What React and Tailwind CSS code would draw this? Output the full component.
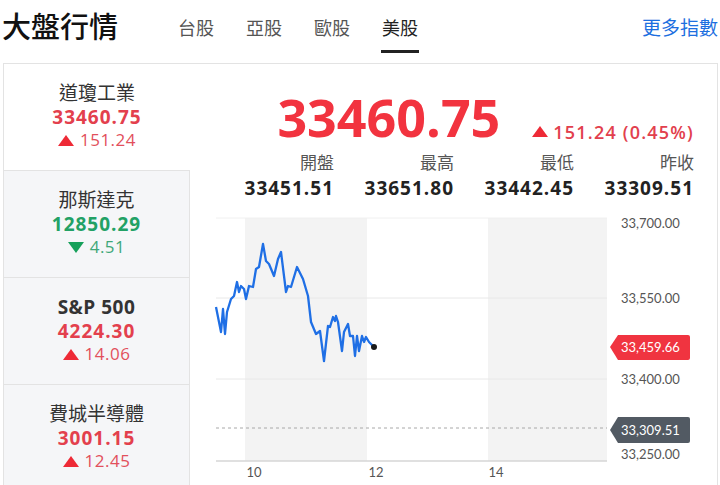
import React from "react";

const indices = [
    {name: "道瓊工業", value: "33460.75", change: "151.24", up: true, active: true},
    {name: "那斯達克", value: "12850.29", change: "4.51", up: false},
    {name: "S&P 500", value: "4224.30", change: "14.06", up: true, bold: true},
    {name: "費城半導體", value: "3001.15", change: "12.45", up: true},
];

const stats = [
    {label: "開盤", value: "33451.51"},
    {label: "最高", value: "33651.80"},
    {label: "最低", value: "33442.45"},
    {label: "昨收", value: "33309.51"},
];

const line = [
    [215, 308], [220, 333], [222, 310], [224, 335], [226, 313], [230, 300], [233, 297], [236, 283],
    [238, 293], [240, 287], [243, 290], [245, 300], [248, 287], [252, 288], [255, 270], [258, 268],
    [262, 245], [265, 262], [268, 265], [273, 277], [277, 260], [280, 253], [285, 293], [287, 287],
    [290, 288], [296, 268], [302, 280], [307, 297], [310, 323], [315, 335], [319, 332], [323, 362],
    [327, 327], [329, 328], [332, 318], [334, 322], [335, 317], [337, 323], [341, 352], [343, 333],
    [347, 325], [349, 337], [352, 337], [354, 357], [356, 337], [358, 352], [361, 337], [363, 343],
    [365, 338], [368, 343], [373, 348],
];

function Triangle({up, className}) {
    return (
        <svg width="16" height="11" viewBox="0 0 16 11" className={className}>
            {up ? <polygon points="8,0 16,11 0,11" fill="#ee2a36"/> : <polygon points="0,0 16,0 8,11" fill="#16a05a"/>}
        </svg>
    );
}

function IndexItem({item}) {
    return (
        <div
            className={
                "h-[107px] border-b border-[#e3e3e3] pt-[17px] flex flex-col items-center " +
                (item.active ? "bg-white" : "bg-[#f5f6f8] border-r")
            }>
            <div className={"text-[19px] leading-[24px] text-[#333] " + (item.bold ? "font-bold tracking-[0.5px]" : "")}>{item.name}</div>
            <div className={"text-[19px] leading-[24px] font-bold tracking-[1px] " + (item.up ? "text-[#e3404d]" : "text-[#22a165]")}>
                {item.value}
            </div>
            <div className={"flex items-center gap-[6px] text-[17px] leading-[22px] tracking-[0.5px] " + (item.up ? "text-[#e2505c]" : "text-[#3fa879]")}>
                <Triangle up={item.up}/>
                <span>{item.change}</span>
            </div>
        </div>
    );
}

function Chart() {
    const pts = line.map(p => p.join(",")).join(" ");
    const axis = {fontFamily: "Lato, 'Liberation Sans', sans-serif", fontSize: 13};
    return (
        <svg width="528" height="280" viewBox="189 205 528 280" className="block">
            <rect x="244" y="219" width="122" height="243" fill="#f3f3f3"/>
            <rect x="487" y="219" width="119" height="243" fill="#f3f3f3"/>
            <line x1="215" y1="219" x2="606" y2="219" stroke="#f0f0f0"/>
            <line x1="215" y1="299" x2="606" y2="299" stroke="#e8e8e8"/>
            <line x1="215" y1="380" x2="606" y2="380" stroke="#e8e8e8"/>
            <line x1="215" y1="429" x2="606" y2="429" stroke="#a8a8a8" strokeDasharray="3,3"/>
            <line x1="215" y1="462" x2="606" y2="462" stroke="#d6d6d6" strokeWidth="1.5"/>
            <polyline points={pts} fill="none" stroke="#1f6fe5" strokeWidth="2.3" strokeLinejoin="round"/>
            <circle cx="373" cy="348" r="3" fill="#1a1a1a"/>

            <g style={axis} fill="#555">
                <text x="620" y="229">33,700.00</text>
                <text x="620" y="304">33,550.00</text>
                <text x="620" y="385">33,400.00</text>
                <text x="620" y="460">33,250.00</text>
                <text x="253" y="478" textAnchor="middle">10</text>
                <text x="375" y="478" textAnchor="middle">12</text>
                <text x="495" y="478" textAnchor="middle">14</text>
            </g>

            <path d="M609 348 L617 336 H687 Q689 336 689 338 V359 Q689 361 687 361 H617 Z" fill="#f03440"/>
            <text x="620" y="353" style={axis} fill="#fff">33,459.66</text>
            <path d="M609 431 L617 418 H687 Q689 418 689 420 V442 Q689 444 687 444 H617 Z" fill="#525a63"/>
            <text x="620" y="436" style={axis} fill="#fff">33,309.51</text>
        </svg>
    );
}

export default function App() {
    return (
        <div className="w-[720px] h-[485px] overflow-hidden bg-white font-['Open_Sans','Noto_Sans_CJK_TC',sans-serif]">
            <div className="h-[63px] flex items-start">
                <h1 className="pl-[2px] pt-[11px] text-[29px] leading-[32px] text-[#111] font-medium">大盤行情</h1>
                <div className="flex gap-[30px] ml-[59px] h-full">
                    {["台股", "亞股", "歐股", "美股"].map((t, i) => (
                        <div key={t} className="flex flex-col items-center pt-[16px]">
                            <span className={"text-[18px] leading-[24px] " + (i === 3 ? "text-[#222]" : "text-[#555]")}>{t}</span>
                            <div className={"mt-[10px] h-[3px] w-[38px] " + (i === 3 ? "bg-[#222]" : "")}/>
                        </div>
                    ))}
                </div>
                <a className="ml-auto pr-[2px] pt-[16px] text-[19px] leading-[24px] text-[#1d6fe0]">更多指數</a>
            </div>

            <div className="ml-[3px] w-[715px] h-[430px] border border-[#e3e3e3] flex">
                <div className="w-[186px] shrink-0">
                    {indices.map(item => <IndexItem key={item.name} item={item}/>)}
                </div>
                <div className="flex-1">
                    <div className="flex justify-end items-baseline gap-[32px] pr-[24px] pt-[25px]">
                        <span className="text-[52px] leading-[56px] font-bold text-[#f2333f]">33460.75</span>
                        <span className="flex items-center gap-[5px] text-[18px] leading-[24px] font-semibold tracking-[1.2px] text-[#e2404d]">
                            <Triangle up={true}/>
                            151.24 (0.45%)
                        </span>
                    </div>
                    <div className="grid grid-cols-4 pl-[24px] pr-[24px] mt-[6px]">
                        {stats.map(s => (
                            <div key={s.label} className="text-right">
                                <div className="text-[17px] leading-[24px] text-[#555]">{s.label}</div>
                                <div className="text-[19px] leading-[26px] font-bold tracking-[1px] text-[#222]">{s.value}</div>
                            </div>
                        ))}
                    </div>
                    <div className="mt-[3px]">
                        <Chart/>
                    </div>
                </div>
            </div>
        </div>
    );
}
